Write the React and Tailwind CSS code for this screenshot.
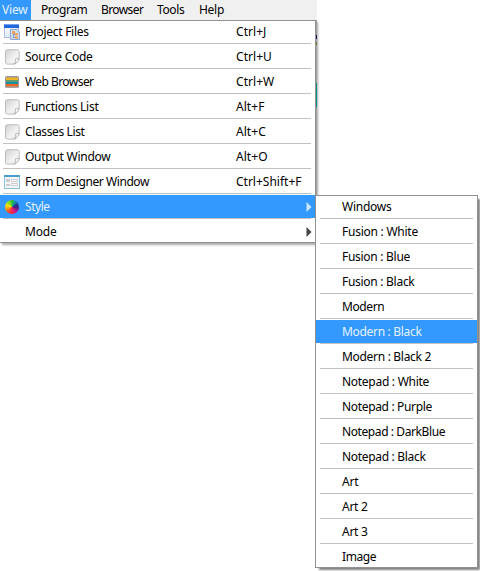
import React, { useLayoutEffect, useRef } from "react";

// Advance widths of the labels, in pixels.
const widths = {
  "Program": 46.3, "Browser": 42.3, "Tools": 27.3, "Help": 25,
  "Project Files": 63.7, "Source Code": 67.5, "Web Browser": 68.5, "Functions List": 73.5,
  "Classes List": 59.5, "Output Window": 85.5, "Form Designer Window": 124,
  "Style": 24.7, "Mode": 31.7, "Ctrl+Shift+F": 65.5,
  "Windows": 49.5, "Fusion : White": 76, "Fusion : Blue": 68, "Fusion : Black": 72.5,
  "Modern": 42.2, "Modern : Black": 79.5, "Modern : Black 2": 89, "Notepad : White": 87,
  "Notepad : Purple": 90, "Notepad : DarkBlue": 103, "Notepad : Black": 83.5,
  "Art": 16.5, "Art 2": 25.7, "Art 3": 25.7, "Image": 34,
};

function Label({ children }) {
  const ref = useRef(null);
  useLayoutEffect(() => {
    const el = ref.current;
    const target = widths[children];
    if (!target) return;
    el.style.letterSpacing = "0px";
    const natural = el.getBoundingClientRect().width;
    el.style.letterSpacing = `${(target - natural) / children.length}px`;
  }, [children]);
  return <span ref={ref} className="inline-block shrink-0">{children}</span>;
}

function FormIcon() {
  return (
    <svg width="16" height="16" viewBox="0 0 16 16">
      <rect x="0.5" y="1.5" width="15" height="13" fill="#f4f6f8" stroke="#8fc1de" />
      <rect x="0" y="1" width="16" height="2" fill="#4a9fd0" />
      <rect x="2" y="5" width="4" height="3" fill="#c9cbcf" />
      <rect x="2" y="10" width="4" height="2" fill="#c9cbcf" />
      <rect x="7.5" y="5.5" width="6" height="2" fill="#fff" stroke="#ccd0d6" />
      <rect x="7.5" y="9.5" width="6" height="2" fill="#fff" stroke="#ccd0d6" />
    </svg>
  );
}

function ProjectIcon() {
  return (
    <svg width="16" height="16" viewBox="0 0 16 16">
      <defs>
        <linearGradient id="proj" x2="1" y2="1">
          <stop offset="0" stopColor="#fff" />
          <stop offset="1" stopColor="#c8daf5" />
        </linearGradient>
      </defs>
      <rect x="0.5" y="0.5" width="14" height="13" fill="url(#proj)" stroke="#a9bee2" />
      <rect x="0" y="0" width="15" height="4" fill="#2166dc" />
      <rect x="0" y="0" width="15" height="1" fill="#6fa2f0" />
      <path d="M6.5 5.500h6.500l2.500 2.500v7.500h-9z" fill="#cfdcf2" stroke="#8fa5d0" />
      <path d="M9.500 9v5M9.500 10.500h3M9.500 13.500h3" stroke="#8a94b5" fill="none" />
      <rect x="8" y="7" width="3" height="3" fill="#e6a565" />
      <rect x="11" y="9" width="3" height="2.500" fill="#eaa45c" />
      <rect x="11" y="12.500" width="3" height="2" fill="#e79d57" />
    </svg>
  );
}

function PageIcon() {
  return (
    <svg width="16" height="16" viewBox="0 0 16 16">
      <defs>
        <linearGradient id="page" x2="1" y2="1">
          <stop offset="0" stopColor="#d0d0d0" />
          <stop offset="0.6" stopColor="#f3f3f3" />
          <stop offset="1" stopColor="#dedede" />
        </linearGradient>
      </defs>
      <path d="M3.500.7h9.700q2 0 2 2v7.500l-4.500 4.900H3.500q-2 0-2-2V2.700q0-2 2-2z" fill="url(#page)" stroke="#bdbdbd" />
      <path d="M15 10.200c-1.500-.8-2.500-.8-3.500-.3.500 1.500.2 3.500-1 5.200q3.200-1.200 4.500-4.900z" fill="#fff" stroke="#a8a8a8" strokeWidth="0.8" />
    </svg>
  );
}

function WebIcon() {
  return (
    <svg width="16" height="16" viewBox="0 0 16 16">
      <defs>
        <clipPath id="web">
          <rect x="1" y="2" width="14" height="12" rx="2" />
        </clipPath>
      </defs>
      <g clipPath="url(#web)">
        <rect width="16" height="16" fill="#93999d" />
        <rect x="2" y="3" width="12" height="2" fill="#c7a45c" />
        <rect x="2" y="4" width="12" height="2" fill="#f0b32a" />
        <rect x="2" y="6" width="12" height="2" fill="#609b6c" />
        <rect x="2" y="8" width="12" height="2" fill="#188fa5" />
        <rect x="2" y="10" width="12" height="2.500" fill="#f0661f" />
        <rect x="1" y="12.500" width="14" height="1.500" fill="#a9a19c" />
      </g>
    </svg>
  );
}

function WheelIcon() {
  return (
    <span className="mt-px ml-px block size-[14px] rounded-full bg-[conic-gradient(#2fbf3a,#159a9a_30deg,#173f9b_62deg,#4a2080_95deg,#b0188a_130deg,#ee1f68_165deg,#f5303a_200deg,#ff8a10_245deg,#f8e010_285deg,#8fdb16_325deg,#2fbf3a)]" />
  );
}

const entries = [
  ["Project Files", "Ctrl+J", ProjectIcon],
  ["Source Code", "Ctrl+U", PageIcon],
  ["Web Browser", "Ctrl+W", WebIcon],
  ["Functions List", "Alt+F", PageIcon],
  ["Classes List", "Alt+C", PageIcon],
  ["Output Window", "Alt+O", PageIcon],
  ["Form Designer Window", "Ctrl+Shift+F", FormIcon],
  ["Style", null, WheelIcon],
  ["Mode", null, null],
];

const styles = [
  "Windows", "Fusion : White", "Fusion : Blue", "Fusion : Black", "Modern",
  "Modern : Black", "Modern : Black 2", "Notepad : White", "Notepad : Purple",
  "Notepad : DarkBlue", "Notepad : Black", "Art", "Art 2", "Art 3", "Image",
];

function Arrow({ active }) {
  return (
    <svg width="6" height="10" viewBox="0 0 6 10" className={active ? "text-[#cce5ff]" : "text-[#444]"}>
      <path d="M0.500 0v10L5.500 5z" fill="currentColor" />
    </svg>
  );
}

function MainMenu() {
  return (
    <div className="h-[223px] w-[316px] border-y border-r border-[#919191] bg-white shadow-[2px_2px_2px_#00000055]">
      <div className="-mt-px">
        {entries.map(([label, keys, Icon], i) => {
          const active = label === "Style";
          return (
            <div key={label} className="h-[25px]">
              <div className={`flex h-[23px] items-center ${active ? "bg-[#3399ff] text-[#e4f2ff]" : ""}`}>
                <span className="mt-px ml-1 block h-4 w-[21px] shrink-0">{Icon && <Icon />}</span>
                <span className="w-[211px] shrink-0"><Label>{label}</Label></span>
                {keys ? (
                  <span className="tracking-[0.05px]"><Label>{keys}</Label></span>
                ) : (
                  <span className="ml-[70px]"><Arrow active={active} /></span>
                )}
              </div>
              {i < entries.length - 1 && <div className="mr-[4px] ml-[3px] h-px bg-[#c1c1c1]" />}
            </div>
          );
        })}
      </div>
    </div>
  );
}

function StyleMenu() {
  return (
    <div className="absolute top-[195px] left-[315px] h-[373px] w-[163px] border border-[#919191] bg-white shadow-[3px_3px_2px_-1px_#00000080]">
      <div className="-mt-px">
        {styles.map((label, i) => (
          <div key={label} className="h-[25px]">
            <div
              className={`flex h-[23px] items-center pl-[26px] ${
                label === "Modern : Black" ? "bg-[#3399ff] text-[#e4f2ff]" : ""
              }`}
            >
              <Label>{label}</Label>
            </div>
            {i < styles.length - 1 && <div className="mx-[4px] h-px bg-[#c1c1c1]" />}
          </div>
        ))}
      </div>
    </div>
  );
}

export default function App() {
  return (
    <div className="relative h-[571px] w-[480px] overflow-hidden bg-white font-['Noto_Sans','Open_Sans',sans-serif] text-[12px] leading-[17px] whitespace-pre text-black">
      <div className="flex h-5 w-[317px] bg-[#f0f0f0]">
        <div className="w-[31px] bg-[#3399ff] pt-px pl-[2px] tracking-[-0.2px] text-[#e4f2ff]">View</div>
        <div className="w-[60px] pt-px pl-[10px]"><Label>Program</Label></div>
        <div className="w-[56px] pt-px pl-[10px]"><Label>Browser</Label></div>
        <div className="w-[42px] pt-px pl-[10px]"><Label>Tools</Label></div>
        <div className="pt-px pl-[10px]"><Label>Help</Label></div>
      </div>
      <div className="flex">
        <MainMenu />
        <div className="flex h-[223px] w-px flex-col bg-[#a0a3a5]">
          <div className="mt-[15px] h-[4px] bg-[#171757]" />
          <div className="mt-[3px] h-[3px] bg-[#77751b]" />
          <div className="mt-[38px] h-[24px] bg-[#008e8b]" />
        </div>
      </div>
      <StyleMenu />
    </div>
  );
}
